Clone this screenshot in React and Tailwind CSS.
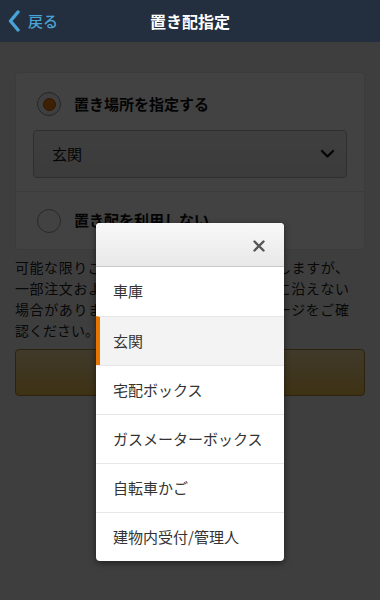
const PLACES = ['車庫', '玄関', '宅配ボックス', 'ガスメーターボックス', '自転車かご', '建物内受付/管理人']

function Radio({ checked }) {
  return (
    <span
      className={
        'flex h-[24px] w-[24px] shrink-0 items-center justify-center rounded-full border ' +
        (checked ? 'border-[#7f92a8] bg-[#f4f4f4]' : 'border-[#9a9a9a] bg-white')
      }
    >
      {checked && <span className="h-[13px] w-[13px] rounded-full border border-[#b35500] bg-[#f07c12]" />}
    </span>
  )
}

export default function App() {
  const selected = '玄関'

  return (
    <div className="min-h-[600px] w-full bg-white font-['Noto_Sans_CJK_JP','Noto_Sans',sans-serif]">
      <div className="relative h-[600px] w-[380px] overflow-hidden bg-[#f0f0f0]">
        <header className="grid h-[42px] grid-cols-[1fr_auto_1fr] items-center bg-[#232f3e]">
          <a href="#" className="flex items-center gap-[8px] pl-[8px] text-[15px] font-medium text-[#4aa3d6]">
            <svg width="12" height="22" viewBox="0 0 12 22" fill="none">
              <path d="M10 2 L2.5 11 L10 20" stroke="#4aa3d6" strokeWidth="3.4" strokeLinecap="round" strokeLinejoin="round" />
            </svg>
            戻る
          </a>
          <h1 className="text-[16px] font-bold text-white">置き配指定</h1>
          <div />
        </header>

        <main className="px-[15px] pt-[30px]">
          <div className="rounded-[4px] border border-[#e2e2e2] bg-white">
            <div className="border-b border-[#e6e6e6] px-[17px] pb-[13px] pt-[19px]">
              <label className="flex h-[24px] items-center gap-[13px] pl-[4px] text-[15px] font-bold text-[#111]">
                <Radio checked />
                置き場所を指定する
              </label>
              <div className="mt-[14px] flex h-[48px] items-center justify-between rounded-[4px] border border-[#b5b5b5] bg-gradient-to-b from-[#f1f1f1] to-[#e6e6e6] pl-[18px] pr-[11px] text-[15px] text-[#111]">
                <span>玄関</span>
                <svg width="15" height="10" viewBox="0 0 15 10" fill="none">
                  <path d="M2 2 L7.5 7.5 L13 2" stroke="#111" strokeWidth="2.4" strokeLinecap="round" strokeLinejoin="round" />
                </svg>
              </div>
            </div>
            <label className="flex h-[57px] items-center gap-[13px] pl-[21px] text-[15px] font-bold text-[#111]">
              <Radio />
              置き配を利用しない
            </label>
          </div>

          <p className="mt-[7px] w-[334px] text-[14px] leading-[21px] text-[#222]">
            <span className="block text-justify [text-align-last:justify]">可能な限りご指定の場所への配達に対応しますが、</span>
            <span className="block text-justify [text-align-last:justify]">一部注文および配送状況によってご希望に沿えない</span>
            <span className="block text-justify [text-align-last:justify]">場合があります。詳細は置き配ヘルプページをご確</span>
            <span className="block">認ください。</span>
          </p>

          <button className="mt-[8px] flex h-[47px] w-full items-center justify-center rounded-[4px] border border-[#a88734] bg-gradient-to-b from-[#f7dfa5] to-[#f0c14b] text-[15px] text-[#111]">
            保存する
          </button>
        </main>

        <div className="absolute inset-x-0 bottom-0 top-[42px] bg-black/[0.74]" />

        <div className="absolute left-[96px] top-[223px] w-[188px] overflow-hidden rounded-[4px] bg-white shadow-[0_2px_6px_rgba(0,0,0,0.5)]">
          <div className="flex h-[44px] items-center justify-end border-b border-[#c8c8c8] bg-gradient-to-b from-[#f8f8f8] to-[#e8e8e8] pr-[19px] pt-[2px]">
            <svg width="12" height="12" viewBox="0 0 12 12" fill="none">
              <path d="M1.5 1.5 L10.5 10.5 M10.5 1.5 L1.5 10.5" stroke="#555" strokeWidth="2.4" strokeLinecap="round" />
            </svg>
          </div>
          <ul>
            {PLACES.map((place, i) => (
              <li
                key={place}
                className={
                  'flex h-[49px] items-center text-[15px] text-[#333] ' +
                  (i > 0 ? 'border-t border-[#e7e7e7] ' : '') +
                  (place === selected ? 'border-l-4 border-l-[#e77600] bg-[#f3f3f3] pl-[13px]' : 'pl-[17px]')
                }
              >
                {place}
              </li>
            ))}
          </ul>
        </div>
      </div>
    </div>
  )
}
